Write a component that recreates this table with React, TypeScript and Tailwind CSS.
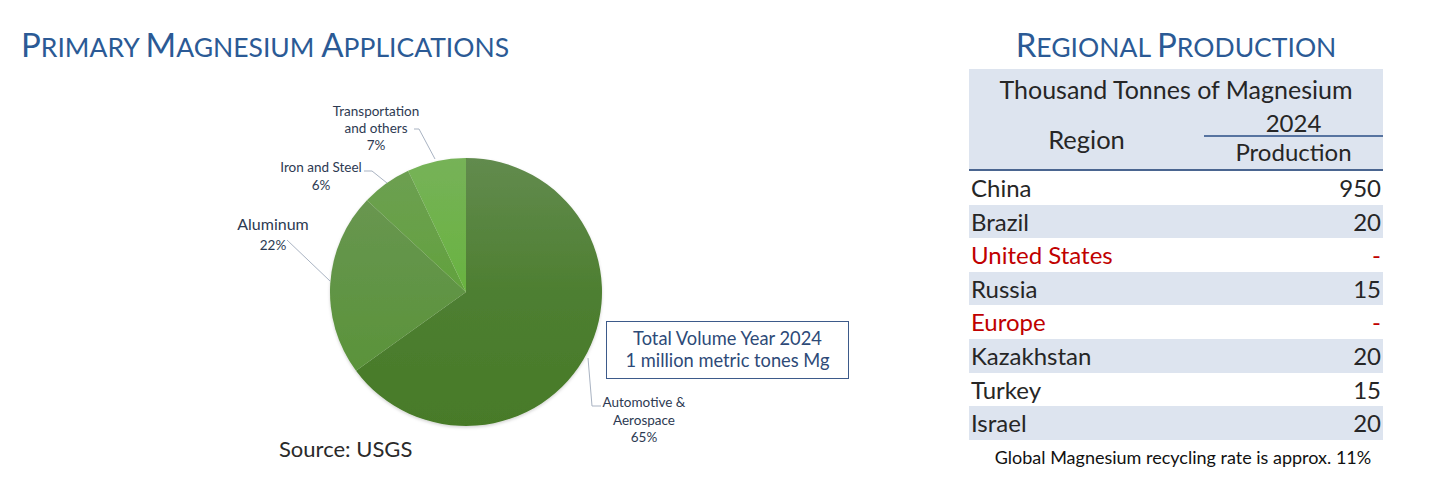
import React from 'react';

const rows = [
  { region: 'China', value: '950', red: false },
  { region: 'Brazil', value: '20', red: false },
  { region: 'United States', value: '-', red: true },
  { region: 'Russia', value: '15', red: false },
  { region: 'Europe', value: '-', red: true },
  { region: 'Kazakhstan', value: '20', red: false },
  { region: 'Turkey', value: '15', red: false },
  { region: 'Israel', value: '20', red: false },
];

// small caps done by hand: first letter big, rest smaller uppercase
const SmallCaps = ({ words }: { words: string[] }) => (
  <>
    {words.map((w, i) => (
      <React.Fragment key={i}>
        <span>{w[0]}</span>
        <span className="text-[26.5px]">
          {w.slice(1).toUpperCase()}
          {i < words.length - 1 ? ' ' : ''}
        </span>
      </React.Fragment>
    ))}
  </>
);

const PieChart = () => (
  <svg
    width="969"
    height="373"
    viewBox="0 64 969 373"
    className="block overflow-visible"
    fontFamily="Lato, sans-serif"
  >
    <defs>
      <linearGradient id="auto" x1="0" y1="158" x2="0" y2="426" gradientUnits="userSpaceOnUse">
        <stop offset="0" stopColor="#628b4e" />
        <stop offset="0.5" stopColor="#4e7f31" />
        <stop offset="1" stopColor="#477a28" />
      </linearGradient>
      <linearGradient id="alu" x1="0" y1="200" x2="0" y2="372" gradientUnits="userSpaceOnUse">
        <stop offset="0" stopColor="#689650" />
        <stop offset="1" stopColor="#5a933a" />
      </linearGradient>
      <linearGradient id="iron" x1="0" y1="170" x2="0" y2="292" gradientUnits="userSpaceOnUse">
        <stop offset="0" stopColor="#6d9f52" />
        <stop offset="1" stopColor="#62a23d" />
      </linearGradient>
      <linearGradient id="trans" x1="0" y1="158" x2="0" y2="292" gradientUnits="userSpaceOnUse">
        <stop offset="0" stopColor="#76b258" />
        <stop offset="1" stopColor="#69b340" />
      </linearGradient>
      <filter id="shadow" x="-10%" y="-10%" width="120%" height="120%">
        <feDropShadow dx="0" dy="1.5" stdDeviation="1.5" floodColor="#000" floodOpacity="0.18" />
      </filter>
    </defs>

    <g filter="url(#shadow)">
      <path d="M466 292 L466 158 A136 134 0 1 1 356 370.8 Z" fill="url(#auto)" />
      <path d="M466 292 L356 370.8 A136 134 0 0 1 366.9 200.2 Z" fill="url(#alu)" />
      <path d="M466 292 L366.9 200.2 A136 134 0 0 1 408.1 170.7 Z" fill="url(#iron)" />
      <path d="M466 292 L408.1 170.7 A136 134 0 0 1 466 158 Z" fill="url(#trans)" />
    </g>

    {/* leader lines */}
    <g fill="none" stroke="#a9b3c2" strokeWidth="1">
      <polyline points="414,129 419,129 435,159" />
      <polyline points="364,171 372,171 387,183" />
      <polyline points="287,240 330,281" />
      <polyline points="588,358 592,406 601,406" />
    </g>

    <g fill="#2d3a52" textAnchor="middle">
      <text x="376" y="115.5" fontSize="13.5">Transportation</text>
      <text x="376" y="132.5" fontSize="13.5">and others</text>
      <text x="376" y="150" fontSize="13.5">7%</text>

      <text x="321" y="172" fontSize="13.5">Iron and Steel</text>
      <text x="321" y="189.5" fontSize="13.5">6%</text>

      <text x="273" y="230" fontSize="16">Aluminum</text>
      <text x="273" y="249.5" fontSize="13.5">22%</text>

      <text x="644" y="407" fontSize="13.5">Automotive &amp;</text>
      <text x="644" y="424.5" fontSize="13.5">Aerospace</text>
      <text x="644" y="441.5" fontSize="13.5">65%</text>
    </g>
  </svg>
);

const App = () => {
  return (
    <div className="w-[1456px] h-[492px] bg-white flex font-['Lato',sans-serif] overflow-hidden">
      {/* left: applications */}
      <div className="w-[969px] flex flex-col">
        <h1 className="h-[64px] pt-[24px] pl-[21px] text-[33px] leading-[40px] text-[#2b5a95] font-normal whitespace-nowrap">
          <SmallCaps words={['Primary', 'Magnesium', 'Applications']} />
        </h1>
        <div className="relative h-[373px]">
          <PieChart />
          <div className="absolute left-[606px] top-[257px] w-[243px] h-[58px] border-[1.5px] border-[#3d5a8a] flex flex-col items-center justify-center text-[18.3px] leading-[21.7px] text-[#2d4a78] whitespace-nowrap">
            <div>Total Volume Year 2024</div>
            <div>1 million metric tones Mg</div>
          </div>
        </div>
        <div className="pl-[279px] text-[22px] leading-[24px] text-[#2a2a2a]">Source: USGS</div>
      </div>

      {/* right: regional production */}
      <div className="w-[414px] flex flex-col">
        <h2 className="h-[64px] pt-[24px] text-[33px] leading-[40px] text-center text-[#2b5a95] font-normal whitespace-nowrap">
          <SmallCaps words={['Regional', 'Production']} />
        </h2>
        <div className="mt-[5px] text-[#262626] text-[24px]">
          <div className="bg-[#dde4ef] border-b-2 border-[#4a6590]">
            <div className="h-[40px] leading-[40px] text-center text-[25px] whitespace-nowrap">Thousand Tonnes of Magnesium</div>
            <div className="flex">
              <div className="w-[235px] h-[60px] flex items-center justify-center text-[25.5px]">Region</div>
              <div className="flex-1 flex flex-col">
                <div className="h-[28px] leading-[28px] text-center border-b-2 border-[#5673a0]">2024</div>
                <div className="h-[30px] leading-[30px] text-center">Production</div>
              </div>
            </div>
          </div>
          {rows.map((r, i) => (
            <div
              key={r.region}
              className={`h-[33.6px] leading-[33.6px] flex justify-between px-[2px] ${
                i % 2 === 1 ? 'bg-[#dde4ef]' : 'bg-white'
              } ${r.red ? 'text-[#c00000]' : ''}`}
            >
              <span>{r.region}</span>
              <span>{r.value}</span>
            </div>
          ))}
        </div>
        <div className="mt-[6px] pl-[14px] text-center text-[18px] leading-[22px] text-[#111111] whitespace-nowrap">
          Global Magnesium recycling rate is approx. 11%
        </div>
      </div>
    </div>
  );
};

export default App;
